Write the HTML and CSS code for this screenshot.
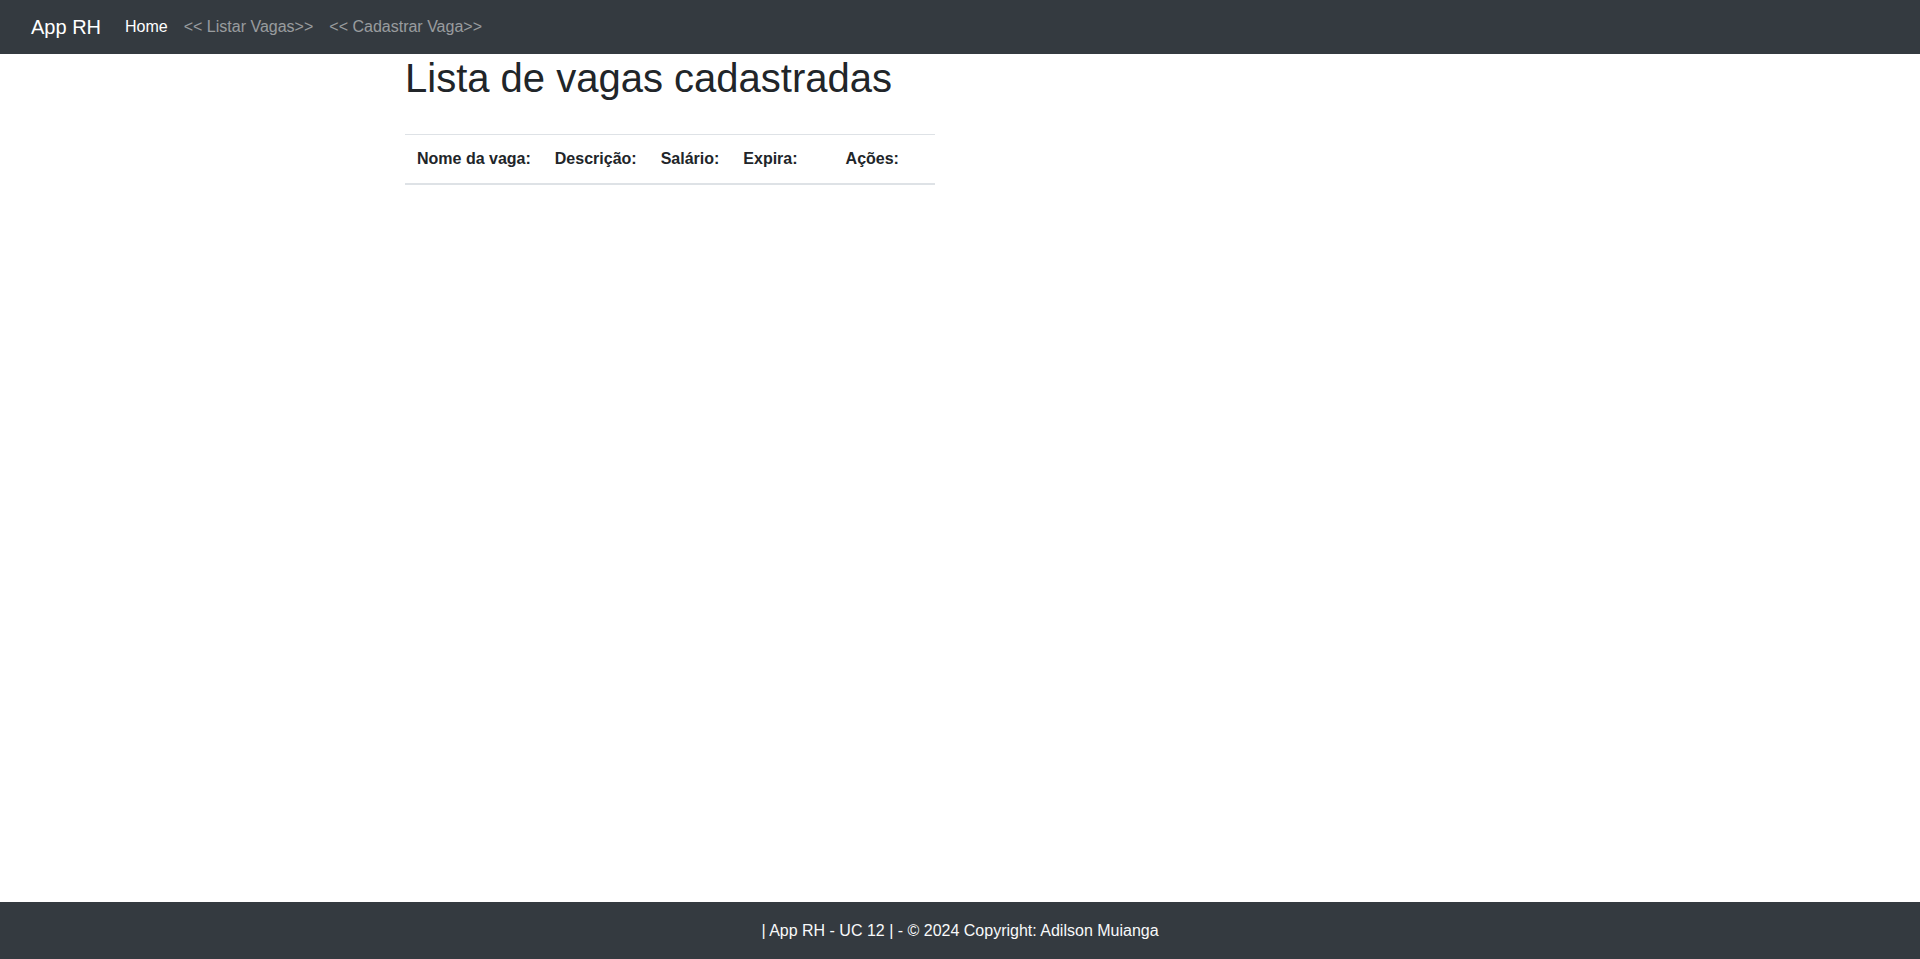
FILE: index.html
```html
<!DOCTYPE html>
<html lang="pt">
<head>
<meta charset="utf-8">
<title>App RH</title>
<link rel="stylesheet" href="styles.css">
</head>
<body>
<nav class="navbar">
  <div class="navbar-inner">
    <a class="brand" href="#">App RH</a>
    <ul class="nav">
      <li><a class="nav-link active" href="#">Home</a></li>
      <li><a class="nav-link" href="#">&lt;&lt; Listar Vagas&gt;&gt;</a></li>
      <li><a class="nav-link" href="#">&lt;&lt; Cadastrar Vaga&gt;&gt;</a></li>
    </ul>
  </div>
</nav>
<main class="container">
  <h1 class="title">Lista de vagas cadastradas</h1>
  <table class="table">
    <thead>
      <tr>
        <th>Nome da vaga:</th>
        <th>Descrição:</th>
        <th>Salário:</th>
        <th class="wide">Expira:</th>
        <th class="wide">Ações:</th>
      </tr>
    </thead>
    <tbody></tbody>
  </table>
</main>
<footer class="footer">| App RH - UC 12 | - © 2024 Copyright: Adilson Muianga</footer>
</body>
</html>
```
FILE: styles.css
```css
* { box-sizing: border-box; }
html, body { margin: 0; padding: 0; }
body {
  font-family: "Liberation Sans", Arial, sans-serif;
  font-size: 16px;
  line-height: 1.5;
  color: #212529;
  background: #fff;
  min-height: 100vh;
  display: flex;
  flex-direction: column;
}
a { text-decoration: none; }
.navbar {
  background: #343a40;
  padding: 7px 16px;
  height: 54px;
}
.navbar-inner {
  padding: 0 15px;
  display: flex;
  align-items: center;
}
.brand {
  color: #fff;
  font-size: 20px;
  line-height: 30px;
  padding: 5px 0;
  margin-right: 16px;
  white-space: nowrap;
}
.nav {
  list-style: none;
  margin: 0;
  padding: 0;
  display: flex;
}
.nav-link {
  display: block;
  padding: 8px;
  line-height: 24px;
  color: rgba(255,255,255,.5);
}
.nav-link.active { color: #fff; }
.container {
  width: 1140px;
  margin: 0 auto;
  padding: 0 15px;
}
.title {
  font-size: 40px;
  font-weight: 500;
  line-height: 1.2;
  margin: 0 0 32px;
}
.table {
  border-collapse: collapse;
  color: #212529;
}
.table th {
  text-align: left;
  font-weight: bold;
  padding: 12px;
  border-top: 1px solid #dee2e6;
  border-bottom: 2px solid #dee2e6;
  vertical-align: bottom;
}
.table th.wide { padding-right: 36px; }
.footer {
  margin-top: auto;
  background: #343a40;
  color: #f8f9fa;
  text-align: center;
  height: 57px;
  line-height: 57px;
}
```
